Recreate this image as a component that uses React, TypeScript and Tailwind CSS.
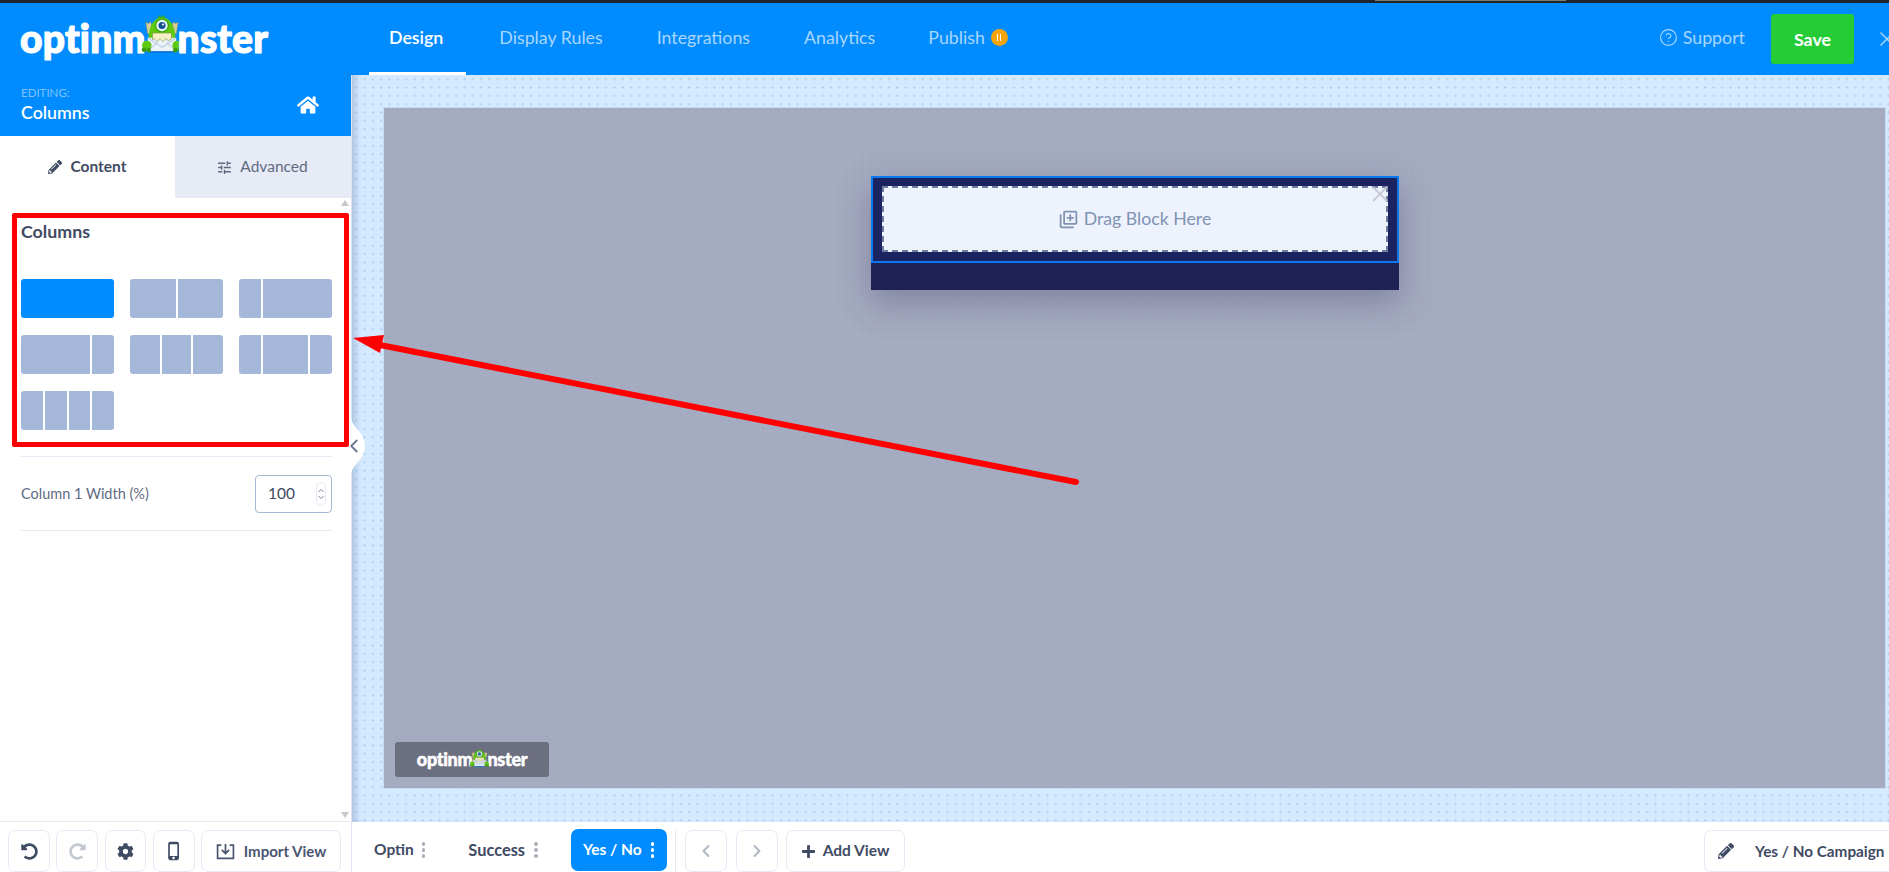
import React from "react";
import { FaPencilAlt, FaHome, FaCog, FaPlus, FaUndoAlt, FaRedoAlt } from "react-icons/fa";
import { MdTune, MdOutlineLibraryAdd, MdPhoneIphone } from "react-icons/md";
import { ChevronLeft, ChevronRight, CircleHelp, X } from "lucide-react";

const font = { fontFamily: '"Lato", "Liberation Sans", sans-serif' };

function Monster({ className }: { className: string }) {
  return (
    <svg viewBox="0 0 44 40" className={className}>
      <ellipse cx="22" cy="38.500" rx="15" ry="1.500" fill="#0a6fd0" />
      <path d="M7 20 L5 8 L8 9 L10 7 L13 18Z M37 20 L39 8 L36 9 L34 7 L31 18Z" fill="#d9cf9a" stroke="#8a8a4a" strokeWidth=".5" />
      <path d="M8 26 C7 12 14 3 22 2 C30 3 37 12 36 26 Z" fill="#5fca10" />
      <path d="M17 3 L20 0 L21 3 L24 0 L25 3Z" fill="#45a80a" />
      <circle cx="22" cy="11" r="7.400" fill="#3da808" />
      <circle cx="22" cy="11" r="6" fill="#e4f5ff" />
      <circle cx="22" cy="11" r="3.700" fill="#15548f" />
      <circle cx="23" cy="10" r="1.100" fill="#fff" />
      <path d="M7 24 H37 V38 H7 Z" fill="#eaf3fb" />
      <path d="M7 24 L22 34 L37 24 M7 38 L17 29 M37 38 L27 29" fill="none" stroke="#a9bdd0" strokeWidth="1" />
      <path d="M12 19 H32 V25 L29 27 L26 25 L23 28 L20 25 L17 28 L14 25 L12 26Z" fill="#f4efc4" stroke="#7b8a3a" strokeWidth=".6" />
      <circle cx="6" cy="32" r="5" fill="#5fca10" />
      <circle cx="38" cy="32" r="5" fill="#5fca10" />
      <circle cx="3" cy="36.500" r="2.400" fill="#3f9e08" />
      <circle cx="8" cy="37" r="2.400" fill="#3f9e08" />
      <circle cx="36" cy="37" r="2.400" fill="#3f9e08" />
      <circle cx="41" cy="36.500" r="2.400" fill="#3f9e08" />
    </svg>
  );
}

function Dots({ className }: { className: string }) {
  return (
    <span className={`flex flex-col gap-[2.5px] ${className}`}>
      <i className="block h-[3.5px] w-[3.5px] rounded-full bg-current" />
      <i className="block h-[3.5px] w-[3.5px] rounded-full bg-current" />
      <i className="block h-[3.5px] w-[3.5px] rounded-full bg-current" />
    </span>
  );
}

function ColOption({ parts, active }: { parts: number[]; active?: boolean }) {
  return (
    <div className="flex h-[39px] w-[93px] gap-[2px] overflow-hidden rounded-[3px]">
      {parts.map((p, i) => (
        <div key={i} className={active ? "bg-[#008cff]" : "bg-[#a6b8d9]"} style={{ flexGrow: p, flexBasis: 0 }} />
      ))}
    </div>
  );
}

const toolBtn = "flex h-[42px] items-center justify-center rounded-[7px] border border-[#e6e9f5] bg-white";

export default function App() {
  return (
    <div className="relative flex h-[872px] w-[1889px] flex-col overflow-hidden bg-white" style={font}>
      <div className="h-[3px] bg-[#1f2428]">
        <div className="ml-[1375px] h-px w-[191px] bg-[#7b7b7b]" />
      </div>
      <header className="flex h-[72px] bg-[#008cff]">
        <div className="flex w-[352px] items-center pl-[20px] pb-[2px]">
          <div className="flex items-center text-[39px] font-black leading-none tracking-[0.2px] text-white [-webkit-text-stroke:1.2px_white]">
            <span>optinm</span>
            <Monster className="mx-[-6px] mt-[-8px] h-[38px] w-[44px] shrink-0" />
            <span>nster</span>
          </div>
        </div>
        <nav className="ml-[17px] flex flex-1 items-stretch text-[17.8px]">
          <div className="mr-[11px] flex items-center border-b-[3px] border-white pl-[20px] pr-[23px] font-semibold text-white">
            Design
          </div>
          <div className="mr-[10px] flex items-center px-[22px] pb-[3px] text-[#a8d6ff]">Display Rules</div>
          <div className="mr-[10px] flex items-center px-[22px] pb-[3px] text-[#a8d6ff]">Integrations</div>
          <div className="mr-[9px] flex items-center px-[22px] pb-[3px] text-[#a8d6ff]">Analytics</div>
          <div className="flex items-center pb-[3px] pl-[22px] text-[#a8d6ff]">
            Publish
            <span className="ml-[6px] flex h-[17px] w-[17px] items-center justify-center gap-[2px] rounded-full bg-[#f5a50a]">
              <i className="block h-[7px] w-px bg-white" />
              <i className="block h-[7px] w-px bg-white" />
            </span>
          </div>
          <div className="ml-auto flex items-center pb-[3px] text-[#a8d6ff]">
            <CircleHelp className="mr-[5px] h-[19px] w-[19px]" strokeWidth={1.5} />
            Support
          </div>
          <div className="ml-[26px] mt-[11px] mb-[11px] flex w-[83px] items-center justify-center rounded-[3px] bg-[#26cc35] font-bold text-white">
            Save
          </div>
          <div className="flex w-[35px] items-center justify-end overflow-hidden">
            <X className="mr-[-10px] h-[24px] w-[24px] shrink-0 text-[#a8d6ff]" strokeWidth={1.5} />
          </div>
        </nav>
      </header>

      <div className="flex min-h-0 flex-1">
        <aside className="relative flex w-[352px] shrink-0 flex-col border-r border-[#dde3f1] bg-white">
          <div className="flex h-[61px] shrink-0 items-center justify-between bg-[#008cff] pb-[2px] pl-[21px] pr-[32px]">
            <div>
              <div className="text-[11.5px] leading-[14px] text-[#7cc2ff]">EDITING:</div>
              <div className="text-[17.8px] font-semibold leading-[24px] text-white">Columns</div>
            </div>
            <FaHome className="h-[22px] w-[22px] text-white" />
          </div>
          <div className="flex h-[62px] shrink-0 text-[15.5px]">
            <div className="flex w-[175px] items-center justify-center gap-[8px] font-bold text-[#3f4a63]">
              <FaPencilAlt className="h-[14px] w-[14px]" />
              Content
            </div>
            <div className="flex flex-1 items-center justify-center gap-[7px] bg-[#e7ebf6] pr-[2px] text-[#5f6a82]">
              <MdTune className="h-[17px] w-[17px]" />
              Advanced
            </div>
          </div>
          <div className="relative flex min-h-0 flex-1 flex-col pl-[21px] pr-[19px] pt-[25px]">
            <span className="absolute right-[2px] top-[2px] h-0 w-0 border-x-[4px] border-b-[6px] border-x-transparent border-b-[#c8c8c8]" />
            <span className="absolute bottom-[3px] right-[2px] h-0 w-0 border-x-[4px] border-t-[6px] border-x-transparent border-t-[#c8c8c8]" />
            <h2 className="text-[17.8px] font-bold leading-[16px] text-[#3f4a63]">Columns</h2>
            <div className="mt-[40px] grid grid-cols-[93px_93px_93px] gap-x-[16px] gap-y-[17px]">
              <ColOption parts={[1]} active />
              <ColOption parts={[1, 1]} />
              <ColOption parts={[1, 3.1]} />
              <ColOption parts={[3.1, 1]} />
              <ColOption parts={[1, 1, 1]} />
              <ColOption parts={[1, 2, 1]} />
              <ColOption parts={[1, 1, 1, 1]} />
            </div>
            <div className="mt-[26px] flex h-[75px] items-center justify-between border-y border-[#e6e9f5]">
              <span className="text-[14.5px] text-[#5f6a82]">Column 1 Width (%)</span>
              <div className="flex h-[38px] w-[77px] items-center justify-between rounded-[4px] border border-[#a6b8d9] pl-[12px] pr-[5px] text-[15.5px] text-[#3f4a63]">
                100
                <span className="flex h-[24px] w-[10px] flex-col items-center justify-center rounded-full border border-[#e6e9f5] text-[#7a8398]">
                  <svg viewBox="0 0 8 12" className="h-[14px] w-[8px]" fill="none" stroke="currentColor" strokeWidth="1">
                    <path d="M1.5 4 L4 1.5 L6.500 4 M1.5 8 L4 10.500 L6.500 8" />
                  </svg>
                </span>
              </div>
            </div>
          </div>
          <div className="flex h-[51px] shrink-0 gap-[6px] border-t border-[#e6e9f5] pl-[8px] pt-[8px]">
            <div className={`${toolBtn} w-[42px] text-[#3f4a63]`}><FaUndoAlt className="h-[17px] w-[17px]" /></div>
            <div className={`${toolBtn} w-[42px] text-[#c3c8d2]`}><FaRedoAlt className="h-[17px] w-[17px]" /></div>
            <div className={`${toolBtn} ml-[1px] w-[41px] text-[#3f4a63]`}><FaCog className="h-[17px] w-[17px]" /></div>
            <div className={`${toolBtn} ml-[1px] w-[42px] text-[#3f4a63]`}><MdPhoneIphone className="h-[20px] w-[20px]" /></div>
            <div className={`${toolBtn} w-[140px] gap-[9px] text-[15px] font-bold text-[#4a5570]`}>
              <svg viewBox="0 0 18 16" className="h-[17px] w-[19px]" fill="none" stroke="currentColor" strokeWidth="1.600">
                <path d="M5 2 H1.500 V14.500 H16.500 V2 H13 M9 1 V10 M5.500 6.500 L9 10 L12.500 6.500" />
              </svg>
              Import View
            </div>
          </div>
        </aside>

        <main className="flex min-w-0 flex-1 flex-col">
          <div className="flex min-h-0 flex-1 bg-[#d6eaff] bg-[radial-gradient(circle,#aed3f6_1px,transparent_1.2px)] bg-[size:8.33px_8.33px] pb-[33px] pl-[31px] pr-[3px] pt-[32px] shadow-[inset_9px_0_8px_-7px_rgba(110,140,175,0.55)]">
            <div className="relative flex flex-1 justify-center border border-[#c5dcf4] bg-[#a5abc0] bg-[radial-gradient(circle,#9da6be_1px,transparent_1.2px)] bg-[size:8.33px_8.33px]">
              <div className="absolute left-[487px] top-[68px] w-[528px] shadow-[0_12px_30px_rgba(60,60,100,0.35)]">
                <div className="relative h-[87px] border-2 border-[#0a78ee] bg-[#1b2460] px-[9px] pt-[8px]">
                  <div className="flex h-[66px] items-center justify-center gap-[5px] border-2 border-dashed border-[#6f7f9f] bg-[#eef2fc] pr-[1px] text-[17.7px] text-[#7f93b3]">
                    <MdOutlineLibraryAdd className="h-[21px] w-[21px]" />
                    Drag Block Here
                  </div>
                  <X className="absolute right-[4px] top-[3px] h-[26px] w-[26px] text-[#c9cbd6]" strokeWidth={1.9} />
                </div>
                <div className="h-[27px] bg-[#202257]" />
              </div>
              <div className="absolute bottom-[11px] left-[11px] flex h-[35px] w-[154px] items-center justify-center rounded-[3px] bg-[#6c6f80] text-[18px] font-black tracking-[-0.3px] text-white [-webkit-text-stroke:0.5px_white]">
                <span>optinm</span>
                <Monster className="mx-[-3px] mt-[-4px] h-[18px] w-[21px] shrink-0 opacity-90" />
                <span>nster</span>
              </div>
            </div>
          </div>
          <div className="flex h-[50px] shrink-0 items-start pt-[7px] text-[15.5px] font-bold text-[#3f4a63]">
            <div className="ml-[22px] flex h-[42px] items-center gap-[8px]">
              Optin <Dots className="text-[#a9afbb]" />
            </div>
            <div className="ml-[43px] flex h-[42px] items-center gap-[9px]">
              <span className="text-[16.4px]">Success</span> <Dots className="text-[#a9afbb]" />
            </div>
            <div className="ml-[33px] flex h-[42px] w-[96px] items-center justify-center gap-[9px] rounded-[7px] bg-[#008cff] text-white">
              Yes / No <Dots className="text-white" />
            </div>
            <div className="ml-[8px] h-[43px] w-px self-stretch bg-[#e6e9f5]" />
            <div className={`${toolBtn} ml-[9px] mt-[1px] w-[42px] text-[#b0b6c3]`}><ChevronLeft className="h-[20px] w-[20px]" strokeWidth={2.4} /></div>
            <div className={`${toolBtn} ml-[9px] mt-[1px] w-[42px] text-[#b0b6c3]`}><ChevronRight className="h-[20px] w-[20px]" strokeWidth={2.4} /></div>
            <div className={`${toolBtn} ml-[8px] mt-[1px] w-[119px] gap-[7px]`}>
              <FaPlus className="h-[15px] w-[15px]" />
              Add View
            </div>
            <div className={`${toolBtn} ml-auto mt-[1px] w-[185px] justify-start gap-[21px] rounded-r-none border-r-0 pl-[13px]`}>
              <FaPencilAlt className="h-[16px] w-[16px]" />
              <span className="text-[15.3px]">Yes / No Campaign</span>
            </div>
          </div>
        </main>
      </div>

      <svg viewBox="0 0 40 56" className="absolute left-[351px] top-[418px] h-[56px] w-[14px]" preserveAspectRatio="none">
        <path d="M0 0 C4 10 40 14 40 28 C40 42 4 46 0 56 Z" fill="#fff" />
      </svg>
      <ChevronLeft className="absolute left-[343px] top-[435px] h-[22px] w-[22px] text-[#6b7690]" strokeWidth={2} />

      <svg viewBox="0 0 1889 872" className="pointer-events-none absolute left-0 top-0 h-[872px] w-[1889px]">
        <path d="M1076 482 L380 345" stroke="#ff0000" strokeWidth="6" strokeLinecap="round" />
        <path d="M353 338 L384 335 L380 353 Z" fill="#ff0000" />
      </svg>
      <div className="pointer-events-none absolute left-[12px] top-[213px] h-[234px] w-[337px] rounded-[2px] border-[5px] border-[#ff0000]" />
    </div>
  );
}
